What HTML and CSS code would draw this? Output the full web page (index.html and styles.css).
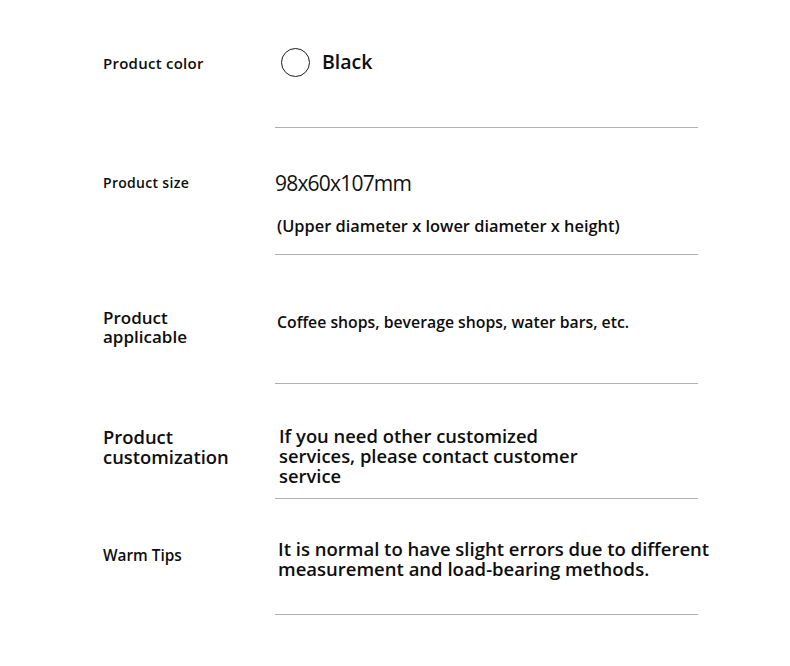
FILE: index.html
```
<!DOCTYPE html>
<html>
<head>
<meta charset="utf-8">
<link rel="stylesheet" href="styles.css">
</head>
<body>
<div class="spec">
  <div class="row row-color">
    <div class="label">Product color</div>
    <div class="value">
      <div class="swatch-line"><span class="swatch"></span><span class="color-name">Black</span></div>
    </div>
  </div>
  <div class="row row-size">
    <div class="label">Product size</div>
    <div class="value">
      <div class="dims">98x60x107mm</div>
      <div class="dims-note">(Upper diameter x lower diameter x height)</div>
    </div>
  </div>
  <div class="row row-app">
    <div class="label">Product<br>applicable</div>
    <div class="value">
      <div class="app-text">Coffee shops, beverage shops, water bars, etc.</div>
    </div>
  </div>
  <div class="row row-custom">
    <div class="label">Product<br>customization</div>
    <div class="value">
      <div class="custom-text">If you need other customized services, please contact customer service</div>
    </div>
  </div>
  <div class="row row-tips">
    <div class="label">Warm Tips</div>
    <div class="value">
      <div class="tips-text">It is normal to have slight errors due to different measurement and load-bearing methods.</div>
    </div>
  </div>
</div>
</body>
</html>
```
FILE: styles.css
```
* { box-sizing: border-box; }
html, body { margin: 0; padding: 0; background: #fff; }
body {
  font-family: "Open Sans", "Noto Sans", sans-serif;
  color: #0e0e0e;
  width: 790px;
  height: 666px;
  overflow: hidden;
}
.spec { padding-left: 103px; }
.row { display: flex; align-items: flex-start; }
.label {
  width: 172px;
  flex: none;
  font-weight: 600;
}
.value {
  width: 423px;
  flex: none;
  border-bottom: 1px solid #b0b0b0;
}

/* row 1 */
.row-color .label { margin-top: 53px; font-size: 15px; letter-spacing: 0.25px; line-height: 20px; }
.row-color .value { padding: 48px 0 51px 6px; }
.swatch-line { display: flex; align-items: center; height: 28px; }
.swatch {
  width: 29px; height: 29px;
  border: 1.3px solid #1a1a1a;
  border-radius: 50%;
  display: inline-block;
}
.color-name { margin-left: 12px; font-size: 19.5px; font-weight: 600; line-height: 26px; }

/* row 2 */
.row-size .label { margin-top: 46px; font-size: 14px; letter-spacing: 0.3px; line-height: 18px; }
.row-size .value { padding: 42px 0 17px 0; }
.dims { font-size: 21px; line-height: 26px; font-weight: 400; letter-spacing: -0.8px; color: #111; }
.dims-note { margin-top: 19px; padding-left: 2px; font-size: 16.4px; line-height: 22px; font-weight: 600; }

/* row 3 */
.row-app .label { margin-top: 53px; font-size: 17px; line-height: 19px; }
.row-app .value { padding: 57px 0 51px 2px; }
.app-text { font-size: 15.8px; line-height: 20px; font-weight: 600; }

/* row 4 */
.row-custom .label { margin-top: 43px; font-size: 18.4px; line-height: 20px; }
.row-custom .value { padding: 42px 0 12px 4px; }
.custom-text { width: 320px; font-size: 18.4px; line-height: 20px; font-weight: 600; }

/* row 5 */
.row-tips .label { margin-top: 47px; font-size: 15.4px; line-height: 20px; }
.row-tips .value { padding: 40px 0 35px 3px; }
.tips-text { width: 460px; font-size: 18.5px; line-height: 20px; font-weight: 600; }
```
